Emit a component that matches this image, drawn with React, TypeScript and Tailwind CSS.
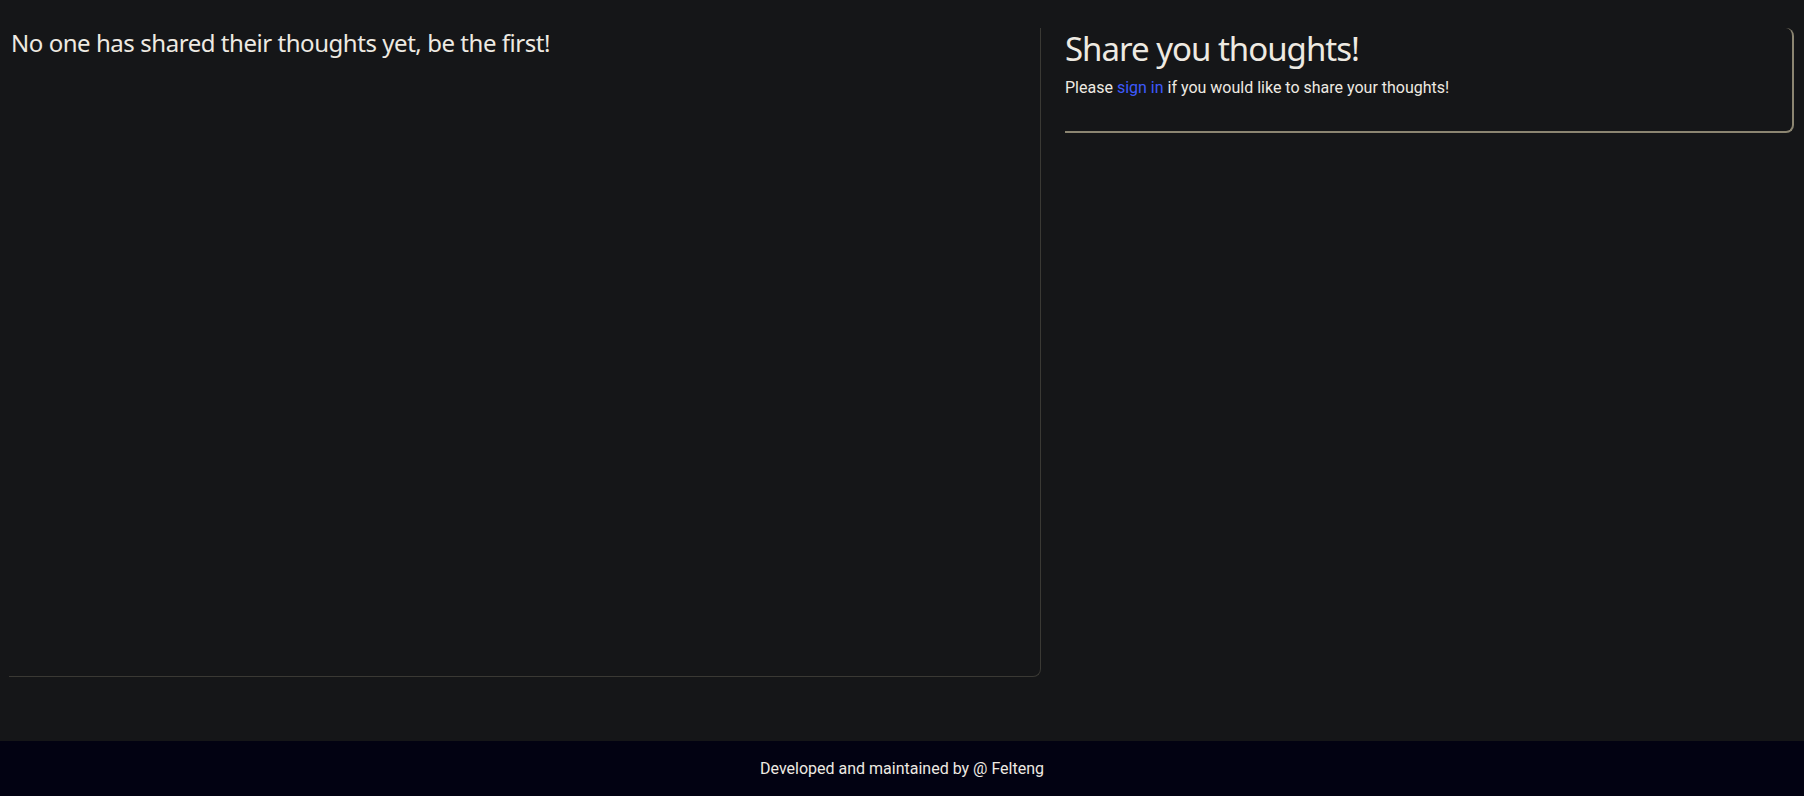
export default function App() {
  return (
    <div className="flex min-h-[796px] flex-col bg-[#151618] font-['Roboto',sans-serif] text-[#eeeae2]">
      <main className="flex flex-1 items-start gap-[24px] pl-[9px] pr-[10px] pt-[28px]">
        {/* Comments */}
        <section className="h-[649px] w-[1032px] rounded-br-lg border-r border-b border-[#3a3934]">
          <h2 className="pl-[2px] font-['Noto_Sans',sans-serif] text-[24px] leading-[29px] tracking-[-0.45px]">
            No one has shared their thoughts yet, be the first!
          </h2>
        </section>

        {/* Share form */}
        <section className="h-[105px] flex-1 rounded-tr-lg rounded-br-lg border-r-2 border-b-2 border-[#8b8571]">
          <h2 className="font-['Noto_Sans',sans-serif] text-[33px] leading-[42px] tracking-[-1px]">
            Share you thoughts!
          </h2>
          <p className="mt-[8px] text-[16px] leading-[20px]">
            Please <a className="cursor-pointer text-[#3d5afe]">sign in</a> if you would like to share your thoughts!
          </p>
        </section>
      </main>

      <footer className="flex h-[55px] items-center justify-center bg-[#020212] text-[16px] text-[#eeeae2]">
        Developed and maintained by @ Felteng
      </footer>
    </div>
  );
}
